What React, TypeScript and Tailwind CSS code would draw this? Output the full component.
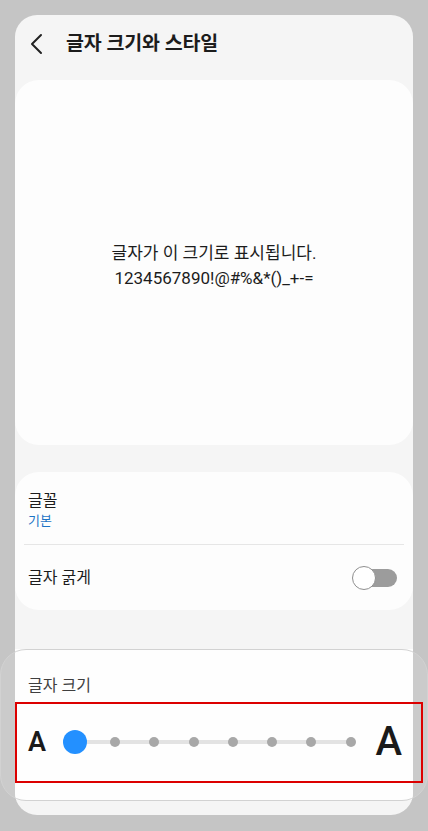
export default function App() {
  const dots = [0, 1, 2, 3, 4, 5, 6];

  return (
    <div
      className="relative w-[428px] h-[831px] bg-[#c5c5c5] overflow-hidden"
      style={{ fontFamily: "Roboto, 'Noto Sans CJK KR', sans-serif" }}
    >
      {/* Phone screen */}
      <div className="absolute left-[15px] top-[15px] w-[398px] h-[800px] rounded-[22px] bg-[#f5f5f5] overflow-hidden flex flex-col">
        {/* Header */}
        <div className="h-[65px] flex items-center pl-[14px] pb-[8px] shrink-0">
          <svg width="16" height="24" viewBox="0 0 16 24" fill="none">
            <path d="M12 3 L3 12 L12 21" stroke="#222" strokeWidth="2" strokeLinecap="round" strokeLinejoin="round" />
          </svg>
          <span className="ml-[21px] text-[19.5px] font-bold text-[#1c1c1c] tracking-[-0.1px]">글자 크기와 스타일</span>
        </div>

        {/* Preview card */}
        <div className="h-[365px] bg-[#fdfdfd] rounded-[24px] flex flex-col items-center justify-center shrink-0 pt-[6px]">
          <p className="text-[17px] leading-[25px] text-[#1c1c1c]">글자가 이 크기로 표시됩니다.</p>
          <p className="text-[17px] leading-[25px] text-[#1c1c1c]">1234567890!@#%&amp;*()_+-=</p>
        </div>

        {/* Settings card */}
        <div className="mt-[27px] h-[138px] bg-[#fdfdfd] rounded-[24px] flex flex-col px-[13px] shrink-0">
          <div className="h-[72px] flex flex-col justify-center pt-[3px]">
            <span className="text-[16px] leading-[22px] text-[#1c1c1c]">글꼴</span>
            <span className="text-[13px] leading-[18px] text-[#1d74c5]">기본</span>
          </div>
          <div className="h-[1px] bg-[#e6e6e6] mx-[-4px]" />
          <div className="flex-1 flex items-center justify-between">
            <span className="text-[16px] text-[#1c1c1c]">글자 굵게</span>
            <div className="relative w-[45px] h-[24px] mr-[3px]">
              <div className="absolute left-[9px] right-0 top-[3px] h-[18px] rounded-full bg-[#9c9c9c]" />
              <div className="absolute left-0 top-0 w-[24px] h-[24px] rounded-full bg-white border-[1.5px] border-[#8f8f8f]" />
            </div>
          </div>
        </div>

        <div className="flex-1" />

        {/* Font size panel */}
        <div className="h-[151px] bg-[#fefefe] flex flex-col shrink-0 mb-[15px]">
          <div className="h-[53px] flex items-end pl-[13px] pb-[4px]">
            <span className="text-[16px] text-[#2a2a2a]">글자 크기</span>
          </div>
          <div className="h-[80px] flex items-center pl-[13px] pr-[11px]">
            <span className="text-[27px] font-semibold text-black w-[35px] leading-none">A</span>
            <div className="relative flex items-center">
              <div className="absolute left-[12px] right-[5px] top-1/2 -translate-y-1/2 h-[4px] bg-[#e0e0e0] rounded-full" />
              <div className="relative w-[24px] h-[24px] rounded-full bg-[#0a84ff]" />
              <div className="relative flex items-center gap-[29.3px] ml-[23px]">
                {dots.map((d) => (
                  <div key={d} className="w-[10px] h-[10px] rounded-full bg-[#9e9e9e]" />
                ))}
              </div>
            </div>
            <span className="ml-auto text-[40px] font-medium text-black leading-none">A</span>
          </div>
        </div>
      </div>

      {/* Bottom sheet frame overlay */}
      <div className="absolute left-0 top-[649px] w-[428px] h-[152px] rounded-[26px] border border-[#d2d2d2] bg-white/10 pointer-events-none" />

      {/* Highlight rectangle */}
      <div className="absolute left-[15px] top-[702px] w-[408px] h-[81px] border-[2.5px] border-[#dc0000] pointer-events-none" />
    </div>
  );
}
